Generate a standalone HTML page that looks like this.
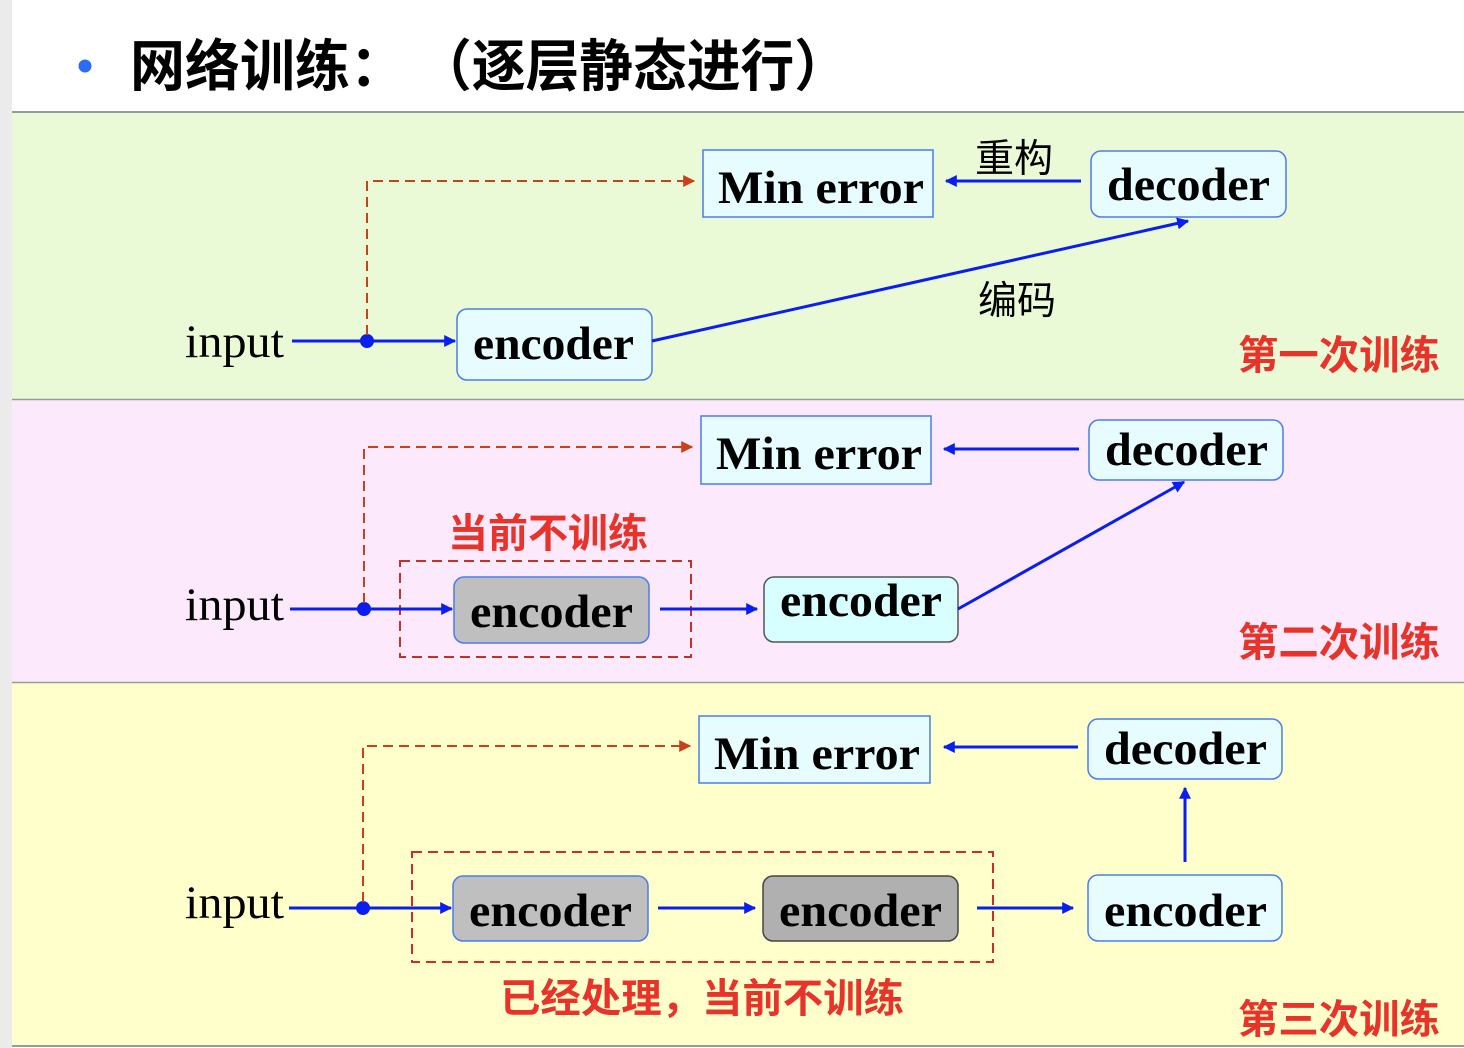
<!DOCTYPE html>
<html><head><meta charset="utf-8"><style>
html,body{margin:0;padding:0;background:#fff}
svg{display:block}
.cn{font-family:"Liberation Sans","Noto Sans CJK SC",sans-serif}
.bx{font-family:"Liberation Serif",serif;font-weight:bold;font-size:47px;fill:#000}
.red{font-family:"Liberation Sans","Noto Sans CJK SC",sans-serif;font-weight:bold;font-size:40px;fill:#e8332a}
.inp{font-family:"Liberation Serif",serif;font-size:47px}
</style></head><body>
<svg width="1464" height="1048" viewBox="0 0 1464 1048" xmlns="http://www.w3.org/2000/svg">
<defs>
<marker id="ab" viewBox="0 0 10 10" refX="9" refY="5" markerWidth="18" markerHeight="12" orient="auto" markerUnits="userSpaceOnUse"><path d="M0,0L10,5L0,10z" fill="#0a1ef0"/></marker>
<marker id="ar" viewBox="0 0 10 10" refX="9" refY="5" markerWidth="18" markerHeight="12" orient="auto" markerUnits="userSpaceOnUse"><path d="M0,0L10,5L0,10z" fill="#c8401c"/></marker>
</defs>
<style>
.b{stroke:#0a1ef0;stroke-width:3;fill:none}
.d{stroke:#c8401c;stroke-width:2;fill:none;stroke-dasharray:10,6}
.db{stroke:#c83024;stroke-width:2;fill:none;stroke-dasharray:10,6}
</style>
<rect x="0" y="0" width="12" height="1048" fill="#ebebeb"/>
<circle cx="85" cy="66" r="6.5" fill="#2b6ef5"/>
<text x="130" y="86" class="cn" font-size="56" font-weight="bold" textLength="275" lengthAdjust="spacingAndGlyphs">网络训练：</text>
<text x="418" y="86" class="cn" font-size="56" font-weight="bold" textLength="430" lengthAdjust="spacingAndGlyphs">（逐层静态进行）</text>
<rect x="12" y="112" width="1452" height="287" fill="#ebfad6"/>
<rect x="12" y="400" width="1452" height="282" fill="#fce9fb"/>
<rect x="12" y="683" width="1452" height="363" fill="#ffffcc"/>
<line x1="12" y1="112" x2="1464" y2="112" stroke="#9a9a9a" stroke-width="2"/>
<line x1="12" y1="399.5" x2="1464" y2="399.5" stroke="#9a9a9a" stroke-width="1.5"/>
<line x1="12" y1="682.5" x2="1464" y2="682.5" stroke="#9a9a9a" stroke-width="1.5"/>
<line x1="12" y1="1046" x2="1464" y2="1046" stroke="#9a9a9a" stroke-width="2"/>

<rect x="703" y="150" width="230" height="67" fill="#e6fcff" stroke="#4b7bf0" stroke-width="1.5"/>
<text x="718" y="203" class="bx" textLength="206" lengthAdjust="spacingAndGlyphs">Min error</text>
<rect x="1091" y="151" width="195" height="66" rx="10" fill="#e6fcff" stroke="#4b7bf0" stroke-width="1.5"/>
<text x="1107" y="200" class="bx" textLength="163" lengthAdjust="spacingAndGlyphs">decoder</text>
<rect x="457" y="309" width="195" height="71" rx="10" fill="#e6fcff" stroke="#4b7bf0" stroke-width="1.5"/>
<text x="473" y="359" class="bx" textLength="161" lengthAdjust="spacingAndGlyphs">encoder</text>
<text x="185" y="357" class="inp" textLength="99" lengthAdjust="spacingAndGlyphs">input</text>
<line x1="292" y1="341" x2="455" y2="341" class="b" marker-end="url(#ab)"/>
<circle cx="367" cy="341" r="7" fill="#0a1ef0"/>
<path d="M367,335 V181 H694" class="d" marker-end="url(#ar)"/>
<line x1="1081" y1="181" x2="946" y2="181" class="b" marker-end="url(#ab)"/>
<line x1="652" y1="341" x2="1188" y2="221" class="b" marker-end="url(#ab)"/>
<text x="975" y="172" class="cn" font-size="39">重构</text>
<text x="978" y="314" class="cn" font-size="39">编码</text>
<text x="1238" y="369" class="red" textLength="202" lengthAdjust="spacingAndGlyphs">第一次训练</text>

<rect x="701" y="416" width="230" height="68" fill="#e6fcff" stroke="#4b7bf0" stroke-width="1.5"/>
<text x="716" y="469" class="bx" textLength="206" lengthAdjust="spacingAndGlyphs">Min error</text>
<rect x="1089" y="420" width="194" height="60" rx="10" fill="#e6fcff" stroke="#4b7bf0" stroke-width="1.5"/>
<text x="1105" y="465" class="bx" textLength="163" lengthAdjust="spacingAndGlyphs">decoder</text>
<rect x="400" y="561" width="291" height="96" class="db"/>
<rect x="454" y="577" width="195" height="66" rx="10" fill="#bfbfbf" stroke="#4b7bf0" stroke-width="1.5"/>
<text x="470" y="627" class="bx" textLength="163" lengthAdjust="spacingAndGlyphs">encoder</text>
<rect x="764" y="577" width="194" height="65" rx="10" fill="#d8ffff" stroke="#555" stroke-width="1.5"/>
<text x="780" y="616" class="bx" textLength="162" lengthAdjust="spacingAndGlyphs">encoder</text>
<text x="185" y="620" class="inp" textLength="99" lengthAdjust="spacingAndGlyphs">input</text>
<line x1="290" y1="609" x2="452" y2="609" class="b" marker-end="url(#ab)"/>
<circle cx="364" cy="609" r="7" fill="#0a1ef0"/>
<path d="M364,603 V447 H692" class="d" marker-end="url(#ar)"/>
<line x1="1079" y1="449" x2="944" y2="449" class="b" marker-end="url(#ab)"/>
<line x1="660" y1="609" x2="757" y2="609" class="b" marker-end="url(#ab)"/>
<line x1="958" y1="609" x2="1184" y2="482" class="b" marker-end="url(#ab)"/>
<text x="448" y="547" class="red" textLength="200" lengthAdjust="spacingAndGlyphs">当前不训练</text>
<text x="1238" y="656" class="red" textLength="202" lengthAdjust="spacingAndGlyphs">第二次训练</text>

<rect x="699" y="716" width="231" height="67" fill="#e6fcff" stroke="#4b7bf0" stroke-width="1.5"/>
<text x="714" y="769" class="bx" textLength="206" lengthAdjust="spacingAndGlyphs">Min error</text>
<rect x="1088" y="719" width="194" height="60" rx="10" fill="#e6fcff" stroke="#4b7bf0" stroke-width="1.5"/>
<text x="1104" y="764" class="bx" textLength="163" lengthAdjust="spacingAndGlyphs">decoder</text>
<rect x="412" y="852" width="581" height="110" class="db"/>
<rect x="453" y="876" width="195" height="65" rx="10" fill="#bfbfbf" stroke="#4b7bf0" stroke-width="1.5"/>
<text x="469" y="926" class="bx" textLength="163" lengthAdjust="spacingAndGlyphs">encoder</text>
<rect x="763" y="876" width="195" height="65" rx="10" fill="#b0b0b0" stroke="#444" stroke-width="1.5"/>
<text x="779" y="926" class="bx" textLength="163" lengthAdjust="spacingAndGlyphs">encoder</text>
<rect x="1088" y="875" width="194" height="66" rx="10" fill="#e6fcff" stroke="#4b7bf0" stroke-width="1.5"/>
<text x="1104" y="926" class="bx" textLength="163" lengthAdjust="spacingAndGlyphs">encoder</text>
<text x="185" y="918" class="inp" textLength="99" lengthAdjust="spacingAndGlyphs">input</text>
<line x1="289" y1="908" x2="451" y2="908" class="b" marker-end="url(#ab)"/>
<circle cx="363" cy="908" r="7" fill="#0a1ef0"/>
<path d="M363,902 V746 H690" class="d" marker-end="url(#ar)"/>
<line x1="1078" y1="747" x2="944" y2="747" class="b" marker-end="url(#ab)"/>
<line x1="658" y1="908" x2="755" y2="908" class="b" marker-end="url(#ab)"/>
<line x1="977" y1="908" x2="1073" y2="908" class="b" marker-end="url(#ab)"/>
<line x1="1185" y1="862" x2="1185" y2="788" class="b" marker-end="url(#ab)"/>
<text x="500" y="1012" class="red" textLength="404" lengthAdjust="spacingAndGlyphs">已经处理，当前不训练</text>
<text x="1238" y="1033" class="red" textLength="202" lengthAdjust="spacingAndGlyphs">第三次训练</text>
</svg>
</body></html>
